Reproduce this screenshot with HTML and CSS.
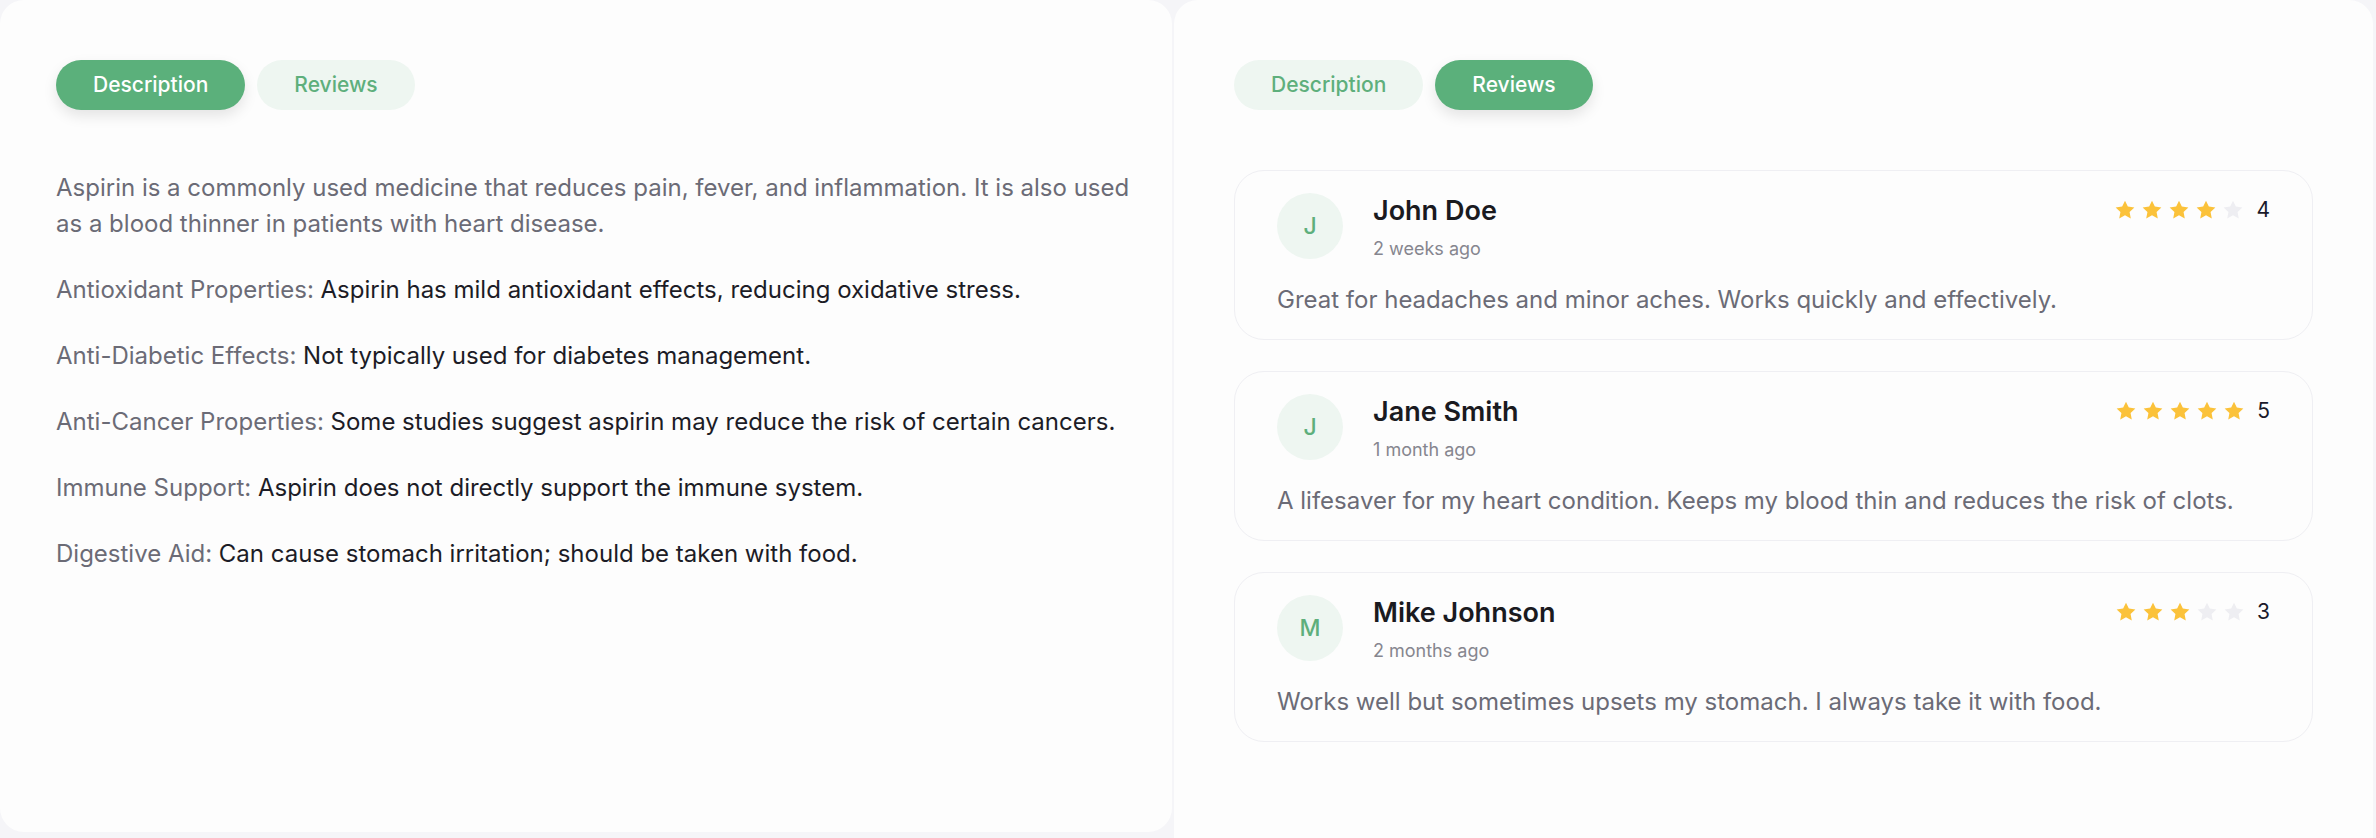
FILE: index.html
```html
<!DOCTYPE html>
<html lang="en">
<head>
<meta charset="utf-8">
<title>Aspirin</title>
<link rel="stylesheet" href="styles.css">
</head>
<body>
<div class="page">
  <section class="panel panel-left">
    <div class="tabs">
      <button class="tab tab-active">Description</button>
      <button class="tab">Reviews</button>
    </div>
    <div class="desc">
      <p class="intro">Aspirin is a commonly used medicine that reduces pain, fever, and inflammation. It is also used as a blood thinner in patients with heart disease.</p>
      <p><span class="label">Antioxidant Properties:</span> <span class="value">Aspirin has mild antioxidant effects, reducing oxidative stress.</span></p>
      <p><span class="label">Anti-Diabetic Effects:</span> <span class="value">Not typically used for diabetes management.</span></p>
      <p><span class="label">Anti-Cancer Properties:</span> <span class="value">Some studies suggest aspirin may reduce the risk of certain cancers.</span></p>
      <p><span class="label">Immune Support:</span> <span class="value">Aspirin does not directly support the immune system.</span></p>
      <p><span class="label">Digestive Aid:</span> <span class="value">Can cause stomach irritation; should be taken with food.</span></p>
    </div>
  </section>

  <section class="panel panel-right">
    <div class="tabs">
      <button class="tab">Description</button>
      <button class="tab tab-active">Reviews</button>
    </div>
    <div class="reviews">
      <article class="review">
        <div class="review-head">
          <div class="who">
            <div class="avatar">J</div>
            <div class="meta">
              <div class="name">John Doe</div>
              <div class="date">2 weeks ago</div>
            </div>
          </div>
          <div class="rating">
            <svg class="star on" viewBox="0 0 24 24"><path d="M12 1.8l3.1 6.5 7.1.9-5.2 4.9 1.3 7.1L12 17.8l-6.3 3.4 1.3-7.1-5.2-4.9 7.1-.9z"/></svg>
            <svg class="star on" viewBox="0 0 24 24"><path d="M12 1.8l3.1 6.5 7.1.9-5.2 4.9 1.3 7.1L12 17.8l-6.3 3.4 1.3-7.1-5.2-4.9 7.1-.9z"/></svg>
            <svg class="star on" viewBox="0 0 24 24"><path d="M12 1.8l3.1 6.5 7.1.9-5.2 4.9 1.3 7.1L12 17.8l-6.3 3.4 1.3-7.1-5.2-4.9 7.1-.9z"/></svg>
            <svg class="star on" viewBox="0 0 24 24"><path d="M12 1.8l3.1 6.5 7.1.9-5.2 4.9 1.3 7.1L12 17.8l-6.3 3.4 1.3-7.1-5.2-4.9 7.1-.9z"/></svg>
            <svg class="star" viewBox="0 0 24 24"><path d="M12 1.8l3.1 6.5 7.1.9-5.2 4.9 1.3 7.1L12 17.8l-6.3 3.4 1.3-7.1-5.2-4.9 7.1-.9z"/></svg>
            <span class="score">4</span>
          </div>
        </div>
        <p class="review-text">Great for headaches and minor aches. Works quickly and effectively.</p>
      </article>

      <article class="review">
        <div class="review-head">
          <div class="who">
            <div class="avatar">J</div>
            <div class="meta">
              <div class="name">Jane Smith</div>
              <div class="date">1 month ago</div>
            </div>
          </div>
          <div class="rating">
            <svg class="star on" viewBox="0 0 24 24"><path d="M12 1.8l3.1 6.5 7.1.9-5.2 4.9 1.3 7.1L12 17.8l-6.3 3.4 1.3-7.1-5.2-4.9 7.1-.9z"/></svg>
            <svg class="star on" viewBox="0 0 24 24"><path d="M12 1.8l3.1 6.5 7.1.9-5.2 4.9 1.3 7.1L12 17.8l-6.3 3.4 1.3-7.1-5.2-4.9 7.1-.9z"/></svg>
            <svg class="star on" viewBox="0 0 24 24"><path d="M12 1.8l3.1 6.5 7.1.9-5.2 4.9 1.3 7.1L12 17.8l-6.3 3.4 1.3-7.1-5.2-4.9 7.1-.9z"/></svg>
            <svg class="star on" viewBox="0 0 24 24"><path d="M12 1.8l3.1 6.5 7.1.9-5.2 4.9 1.3 7.1L12 17.8l-6.3 3.4 1.3-7.1-5.2-4.9 7.1-.9z"/></svg>
            <svg class="star on" viewBox="0 0 24 24"><path d="M12 1.8l3.1 6.5 7.1.9-5.2 4.9 1.3 7.1L12 17.8l-6.3 3.4 1.3-7.1-5.2-4.9 7.1-.9z"/></svg>
            <span class="score">5</span>
          </div>
        </div>
        <p class="review-text">A lifesaver for my heart condition. Keeps my blood thin and reduces the risk of clots.</p>
      </article>

      <article class="review">
        <div class="review-head">
          <div class="who">
            <div class="avatar">M</div>
            <div class="meta">
              <div class="name">Mike Johnson</div>
              <div class="date">2 months ago</div>
            </div>
          </div>
          <div class="rating">
            <svg class="star on" viewBox="0 0 24 24"><path d="M12 1.8l3.1 6.5 7.1.9-5.2 4.9 1.3 7.1L12 17.8l-6.3 3.4 1.3-7.1-5.2-4.9 7.1-.9z"/></svg>
            <svg class="star on" viewBox="0 0 24 24"><path d="M12 1.8l3.1 6.5 7.1.9-5.2 4.9 1.3 7.1L12 17.8l-6.3 3.4 1.3-7.1-5.2-4.9 7.1-.9z"/></svg>
            <svg class="star on" viewBox="0 0 24 24"><path d="M12 1.8l3.1 6.5 7.1.9-5.2 4.9 1.3 7.1L12 17.8l-6.3 3.4 1.3-7.1-5.2-4.9 7.1-.9z"/></svg>
            <svg class="star" viewBox="0 0 24 24"><path d="M12 1.8l3.1 6.5 7.1.9-5.2 4.9 1.3 7.1L12 17.8l-6.3 3.4 1.3-7.1-5.2-4.9 7.1-.9z"/></svg>
            <svg class="star" viewBox="0 0 24 24"><path d="M12 1.8l3.1 6.5 7.1.9-5.2 4.9 1.3 7.1L12 17.8l-6.3 3.4 1.3-7.1-5.2-4.9 7.1-.9z"/></svg>
            <span class="score">3</span>
          </div>
        </div>
        <p class="review-text">Works well but sometimes upsets my stomach. I always take it with food.</p>
      </article>
    </div>
  </section>
</div>
</body>
</html>
```

FILE: styles.css
```css
* { box-sizing: border-box; }

html, body {
  margin: 0;
  padding: 0;
  height: 838px;
  overflow: hidden;
  background: #f5f5f8;
  font-family: "Inter", "Noto Sans", sans-serif;
}

.page {
  display: flex;
  align-items: flex-start;
  gap: 2px;
  width: 2376px;
}

.panel {
  background: #fdfdfd;
  border-radius: 24px;
}

.panel-left {
  width: 1172px;
  height: 832px;
  padding: 60px 36px 0 56px;
}

.panel-right {
  width: 1199px;
  height: 900px;
  padding: 60px 60px 0 60px;
}

.tabs {
  display: flex;
  gap: 12px;
}

.tab {
  height: 50px;
  padding: 0 37px 2px 37px;
  border: none;
  border-radius: 25px;
  background: #eef6f1;
  color: #5eaf7c;
  font-family: "Inter", "Noto Sans", sans-serif;
  font-size: 21px;
  font-weight: 500;
  cursor: pointer;
}

.tab-active {
  background: #5bb07b;
  color: #ffffff;
  box-shadow: 0 6px 14px rgba(0, 0, 0, 0.1);
}

.desc {
  margin-top: 60px;
  font-size: 24px;
  line-height: 36px;
}

.desc p {
  margin: 0 0 30px 0;
}

.intro, .label {
  color: #6b6b76;
}

.value {
  color: #1c1c26;
}

.reviews {
  margin-top: 60px;
  display: flex;
  flex-direction: column;
  gap: 31px;
}

.review {
  border: 1.5px solid #efeff3;
  border-radius: 30px;
  padding: 21px 42px 21px 42px;
  background: #fdfdfd;
}

.review-head {
  display: flex;
  justify-content: space-between;
  align-items: flex-start;
}

.who {
  display: flex;
  align-items: center;
  gap: 30px;
}

.avatar {
  width: 66px;
  height: 66px;
  border-radius: 50%;
  background: #eef6f1;
  color: #5eaf7c;
  font-size: 23px;
  font-weight: 500;
  display: flex;
  align-items: center;
  justify-content: center;
}

.meta {
  display: flex;
  flex-direction: column;
  gap: 8px;
}

.name {
  font-size: 27px;
  font-weight: 600;
  color: #1a1a1f;
  line-height: 38px;
}

.date {
  font-size: 18px;
  color: #86868f;
  line-height: 22px;
}

.rating {
  display: flex;
  align-items: center;
  gap: 5px;
  margin-top: 6px;
}

.star {
  width: 22px;
  height: 22px;
  fill: #eeeef2;
}

.star.on {
  fill: #fbc23a;
}

.score {
  margin-left: 7px;
  font-size: 21px;
  color: #1a1a2a;
  line-height: 24px;
}

.review-text {
  margin: 22px 0 0 0;
  font-size: 24px;
  line-height: 36px;
  color: #6b6b76;
}
```
